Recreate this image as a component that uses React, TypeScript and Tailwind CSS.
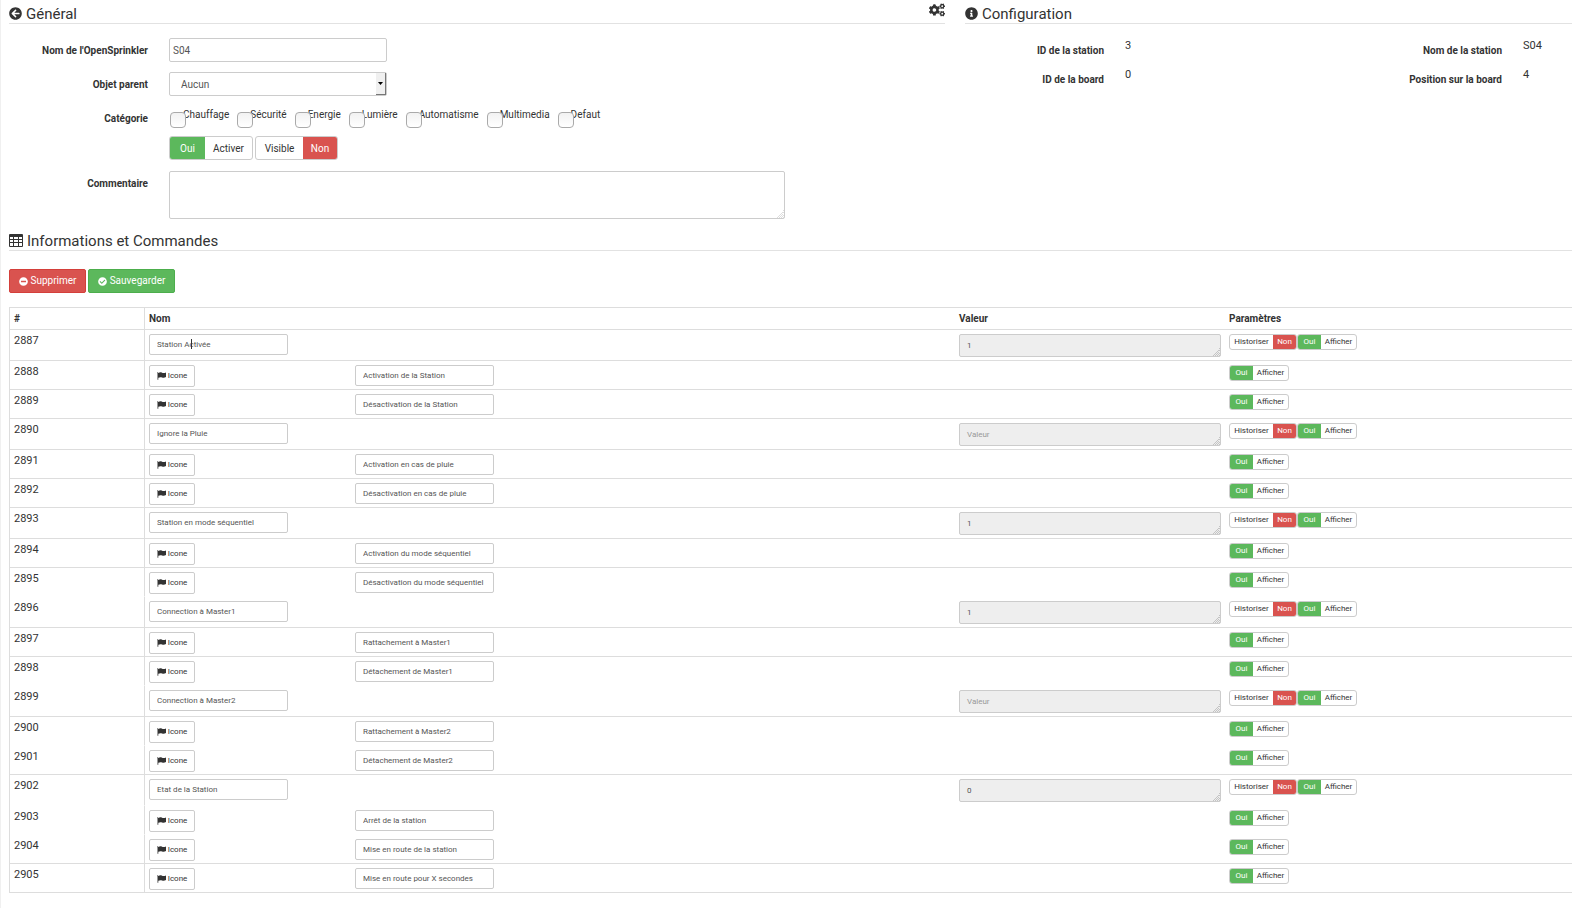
import React from "react";
import { FaArrowCircleLeft, FaInfoCircle, FaCogs, FaMinusCircle, FaCheckCircle } from "react-icons/fa";

type Row = {
  id: number;
  name: string;
  kind: "info" | "action";
  value?: string;
  line: boolean;
  caret?: boolean;
};

const rows: Row[] = [
  { id: 2887, name: "Station Activée", kind: "info", value: "1", line: true, caret: true },
  { id: 2888, name: "Activation de la Station", kind: "action", line: true },
  { id: 2889, name: "Désactivation de la Station", kind: "action", line: true },
  { id: 2890, name: "Ignore la Pluie", kind: "info", value: "", line: true },
  { id: 2891, name: "Activation en cas de pluie", kind: "action", line: true },
  { id: 2892, name: "Désactivation en cas de pluie", kind: "action", line: true },
  { id: 2893, name: "Station en mode séquentiel", kind: "info", value: "1", line: true },
  { id: 2894, name: "Activation du mode séquentiel", kind: "action", line: true },
  { id: 2895, name: "Désactivation du mode séquentiel", kind: "action", line: false },
  { id: 2896, name: "Connection à Master1", kind: "info", value: "1", line: true },
  { id: 2897, name: "Rattachement à Master1", kind: "action", line: true },
  { id: 2898, name: "Détachement de Master1", kind: "action", line: false },
  { id: 2899, name: "Connection à Master2", kind: "info", value: "", line: true },
  { id: 2900, name: "Rattachement à Master2", kind: "action", line: false },
  { id: 2901, name: "Détachement de Master2", kind: "action", line: true },
  { id: 2902, name: "Etat de la Station", kind: "info", value: "0", line: false },
  { id: 2903, name: "Arrêt de la station", kind: "action", line: false },
  { id: 2904, name: "Mise en route de la station", kind: "action", line: true },
  { id: 2905, name: "Mise en route pour X secondes", kind: "action", line: true },
];

const categories = ["Chauffage", "Sécurité", "Energie", "Lumière", "Automatisme", "Multimedia", "Defaut"];

function TableIcon() {
  return (
    <svg viewBox="0 0 14 13" className="h-[13px] w-[14px]" fill="currentColor" aria-hidden="true">
      <path
        fillRule="evenodd"
        d="M1 0h12a1 1 0 0 1 1 1v11a1 1 0 0 1-1 1H1a1 1 0 0 1-1-1V1a1 1 0 0 1 1-1zM1 3v2h3V3zM5 3v2h4V3zM10 3v2h3V3zM1 6v2h3V6zM5 6v2h4V6zM10 6v2h3V6zM1 9v3h3V9zM5 9v3h4V9zM10 9v3h3V9z"
      />
    </svg>
  );
}

function FlagIcon() {
  return (
    <svg viewBox="0 0 9 8" className="h-[8px] w-[9px]" fill="currentColor" aria-hidden="true">
      <path d="M0 .7a.7.7 0 0 1 1.300 0v7.100H.5V1.200A.6.6 0 0 1 0 .7zM1.300 1C2.600.3 3.800.1 5 .7c1.100.5 2.300.5 4-.3v4.700c-1.500.9-2.800.9-4 .4-1.200-.5-2.300-.4-3.700.3z" />
    </svg>
  );
}

function Grip({ dark }: { dark?: boolean }) {
  return (
    <svg
      viewBox="0 0 8 8"
      className={`pointer-events-none absolute right-px bottom-px h-2 w-2 ${dark ? "text-[#c4c4c4]" : "text-[#dddddd]"}`}
      fill="currentColor"
      aria-hidden="true"
    >
      <path d="M7 0h1v1H7zM6 2h1v1H6zM5 3h1v1H5zM7 2h1v1H7zM4 4h1v1H4zM6 4h1v1H6zM3 5h1v1H3zM5 5h1v1H5zM7 5h1v1H7zM2 6h1v1H2zM4 6h1v1H4zM6 6h1v1H6zM1 7h1v1H1zM3 7h1v1H3zM5 7h1v1H5zM7 7h1v1H7z" />
    </svg>
  );
}

function Title({ icon, children }: { icon: React.ReactNode; children: React.ReactNode }) {
  return (
    <h2 className="flex h-6 items-center gap-1 border-b border-[#e2e2e2] pt-1 text-[15px] leading-5">
      {icon}
      {children}
    </h2>
  );
}

function Label({ htmlFor, children }: { htmlFor?: string; children: React.ReactNode }) {
  return (
    <label htmlFor={htmlFor} className="flex h-6 items-center justify-end pt-0.5 text-right text-[10px] font-bold">
      {children}
    </label>
  );
}

function SmallToggle({ text, on }: { text: string; on: boolean }) {
  return (
    <button type="button" className="flex h-4 overflow-hidden rounded-[3px] border border-[#cccccc] bg-white text-[8px] leading-[14px]">
      {on && <span className="w-[23px] bg-[#5cb85c] text-center text-white">Oui</span>}
      <span className={on ? "w-[35px] text-center" : "w-[43px] text-center"}>{text}</span>
      {!on && <span className="w-[23px] bg-[#d9534f] text-center text-white">Non</span>}
    </button>
  );
}

function Toggle({ text, on }: { text: string; on: boolean }) {
  return (
    <button type="button" className="flex h-6 overflow-hidden rounded-[3px] border border-[#cccccc] bg-white text-[10px] leading-[24px]">
      {on && <span className="w-[35px] bg-[#5cb85c] text-center text-white">Oui</span>}
      <span className="w-[47px] text-center">{text}</span>
      {!on && <span className="w-[34px] bg-[#d9534f] text-center text-white">Non</span>}
    </button>
  );
}

const smallInput =
  "block h-[21px] w-[139px] rounded-[2px] border border-[#cccccc] bg-white px-[7px] text-[8px] text-[#555555] outline-none";

function CommandRow({ row }: { row: Row }) {
  const info = row.kind === "info";
  const line = row.line ? "border-b border-b-[#dddddd]" : "border-b border-b-transparent";
  const cell = `px-1 pt-1 align-top ${line}`;
  const name = (
    <input type="text" aria-label={`Nom ${row.id}`} defaultValue={row.name} className={smallInput} />
  );
  return (
    <tr className={info ? "h-[31px]" : "h-[29px]"}>
      <td className={`border-r border-r-[#dddddd] leading-[14px] ${cell}`}>{row.id}</td>
      <td className={cell}>
        {info ? (
          <div className="relative w-[139px]">
            {name}
            {row.caret && <span className="absolute top-[5px] left-[42px] h-[10px] w-px bg-[#333333]" />}
          </div>
        ) : (
          <div className="grid grid-cols-[46px_139px] gap-40">
            <button
              type="button"
              className="flex h-[22px] items-center justify-center gap-0.5 rounded-[2px] border border-[#cccccc] bg-white text-[8px]"
            >
              <FlagIcon />
              Icone
            </button>
            {name}
          </div>
        )}
      </td>
      <td className={cell}>
        {info && (
          <div className="relative">
            <textarea
              readOnly
              aria-label={`Valeur ${row.id}`}
              placeholder="Valeur"
              defaultValue={row.value}
              className="block h-[23px] w-full resize-none overflow-hidden rounded-[2px] border border-[#cccccc] bg-[#eeeeee] px-[7px] py-1 text-[8px] leading-[13px] text-[#555555] outline-none placeholder:text-[#999999]"
            />
            <Grip dark />
          </div>
        )}
      </td>
      <td className={cell}>
        <div className="flex">
          {info && <SmallToggle text="Historiser" on={false} />}
          <SmallToggle text="Afficher" on />
        </div>
      </td>
    </tr>
  );
}

const term = "pt-[5px] text-right text-[10px] leading-[14px] font-bold";

export default function App() {
  return (
    <main className="min-h-screen overflow-x-hidden border-l border-[#f0f0f0] bg-white pl-2 font-['Roboto',sans-serif] text-[11px] leading-[14px] text-[#333333]">
      <div className="grid grid-cols-[936fr_607fr] gap-5">
        <section>
          <div className="relative">
            <Title icon={<FaArrowCircleLeft className="size-[13px]" />}>Général</Title>
            <button type="button" aria-label="Configuration avancée" className="absolute top-0.5 right-0">
              <FaCogs className="size-4" />
            </button>
          </div>
          <form className="grid grid-cols-[139px_1fr] gap-x-[21px] pt-[14px]">
            <Label htmlFor="nom">Nom de l'OpenSprinkler</Label>
            <input
              id="nom"
              type="text"
              defaultValue="S04"
              className="mb-[10px] h-6 w-[218px] rounded-[2px] border border-[#cccccc] bg-white px-[3px] text-[10px] text-[#555555] outline-none"
            />
            <Label htmlFor="parent">Objet parent</Label>
            <div className="relative mb-[10px] w-[218px]">
              <select
                id="parent"
                className="block h-6 w-full appearance-none rounded-[2px] border border-[#cccccc] bg-white px-[11px] pt-0.5 text-[10px] text-[#555555] outline-none"
              >
                <option>Aucun</option>
              </select>
              <span className="pointer-events-none absolute top-px right-px flex h-[22px] w-[10px] items-center justify-center border-r border-b border-[#777777] bg-[#f0f0f0]">
                <svg viewBox="0 0 5 3" className="h-[3px] w-[5px]" aria-hidden="true">
                  <path d="M0 0h5L2.500 3z" fill="#000000" />
                </svg>
              </span>
            </div>
            <Label>Catégorie</Label>
            <div className="mb-[6px] flex h-6 gap-2 pl-px">
              {categories.map((name) => (
                <label key={name} className="flex items-start text-[10px]">
                  <input
                    type="checkbox"
                    className="relative mt-[6px] size-4 appearance-none rounded-[4px] border border-[#aaaaaa] bg-linear-to-b from-[#f2f2f2] to-white"
                  />
                  <span className="-ml-[3px] pt-0.5">{name}</span>
                </label>
              ))}
            </div>
            <div className="col-start-2 mb-[11px] flex gap-0.5">
              <Toggle text="Activer" on />
              <Toggle text="Visible" on={false} />
            </div>
            <Label htmlFor="commentaire">Commentaire</Label>
            <div className="relative w-[616px]">
              <textarea
                id="commentaire"
                className="block h-12 w-full resize-none rounded-[2px] border border-[#cccccc] bg-white px-2 outline-none"
              />
              <Grip />
            </div>
          </form>
        </section>

        <section>
          <Title icon={<FaInfoCircle className="size-[13px]" />}>Configuration</Title>
          <dl className="grid grid-cols-[139px_1fr_138px_70px] gap-y-[5px] pt-[15px]">
            <dt className={term}>ID de la station</dt>
            <dd className="h-6 pl-[21px]">3</dd>
            <dt className={term}>Nom de la station</dt>
            <dd className="pl-[21px]">S04</dd>
            <dt className={term}>ID de la board</dt>
            <dd className="h-6 pl-[21px]">0</dd>
            <dt className={term}>Position sur la board</dt>
            <dd className="pl-[21px]">4</dd>
          </dl>
        </section>
      </div>

      <section className="pt-2">
        <Title icon={<TableIcon />}>Informations et Commandes</Title>
        <div className="mt-[18px] mb-[14px] flex gap-0.5 text-[10px] text-white">
          <button
            type="button"
            className="flex h-6 w-[77px] items-center justify-center gap-[3px] rounded-[2px] border border-[#d43f3a] bg-[#d9534f]"
          >
            <FaMinusCircle className="size-[9px]" />
            Supprimer
          </button>
          <button
            type="button"
            className="flex h-6 w-[87px] items-center justify-center gap-[3px] rounded-[2px] border border-[#4cae4c] bg-[#5cb85c]"
          >
            <FaCheckCircle className="size-[9px]" />
            Sauvegarder
          </button>
        </div>
        <table className="w-full table-fixed border-separate border-spacing-0 border-t border-l border-[#dddddd]">
          <colgroup>
            <col className="w-[135px]" />
            <col />
            <col className="w-[270px]" />
            <col className="w-[347px]" />
          </colgroup>
          <thead>
            <tr className="h-[22px] text-left text-[10px]">
              <th className="border-r border-b border-[#dddddd] px-1">#</th>
              <th className="border-b border-[#dddddd] px-1">Nom</th>
              <th className="border-b border-[#dddddd] px-1">Valeur</th>
              <th className="border-b border-[#dddddd] px-1">Paramètres</th>
            </tr>
          </thead>
          <tbody>
            {rows.map((row) => (
              <CommandRow key={row.id} row={row} />
            ))}
          </tbody>
        </table>
      </section>
    </main>
  );
}
